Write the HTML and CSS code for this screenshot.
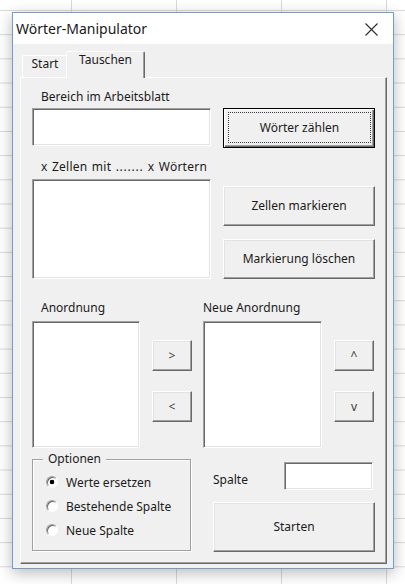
FILE: index.html
```html
<!DOCTYPE html>
<html lang="de">
<head>
<meta charset="utf-8">
<title>Wörter-Manipulator</title>
<link rel="stylesheet" href="styles.css">
</head>
<body>
<div class="window">
  <div class="titlebar">
    <span class="title">Wörter-Manipulator</span>
    <svg class="close" width="13" height="13" viewBox="0 0 13 13"><path d="M0.5 0.5 L12.5 12.5 M12.5 0.5 L0.5 12.5" stroke="#2b2b2b" stroke-width="1.1" fill="none"/></svg>
  </div>
  <div class="client">
    <div class="tabs">
      <div class="tab">Start</div>
      <div class="tab active">Tauschen</div>
    </div>
    <div class="panel">
      <div class="lbl lbl-1">Bereich im Arbeitsblatt</div>
      <div class="row-a">
        <div class="textbox tb-range"></div>
        <button class="btn btn-wide btn-default"><span class="focus">Wörter zählen</span></button>
      </div>
      <div class="lbl lbl-2">x Zellen mit <span class="dots">.......</span> x Wörtern</div>
      <div class="row-b">
        <div class="textbox lb-cells"></div>
        <div class="btn-col">
          <button class="btn btn-wide">Zellen markieren</button>
          <button class="btn btn-wide">Markierung löschen</button>
        </div>
      </div>
      <div class="order">
        <div class="lbl order-lbl-1">Anordnung</div>
        <div class="lbl order-lbl-2">Neue Anordnung</div>
        <div class="textbox lb-old"></div>
        <div class="arrows arrows-1">
          <button class="btn btn-arrow">&gt;</button>
          <button class="btn btn-arrow">&lt;</button>
        </div>
        <div class="textbox lb-new"></div>
        <div class="arrows arrows-2">
          <button class="btn btn-arrow">^</button>
          <button class="btn btn-arrow">v</button>
        </div>
      </div>
      <div class="row-d">
        <div class="frame">
          <span class="legend">Optionen</span>
          <div class="radio-row"><span class="radio on"></span><span>Werte ersetzen</span></div>
          <div class="radio-row"><span class="radio"></span><span>Bestehende Spalte</span></div>
          <div class="radio-row"><span class="radio"></span><span>Neue Spalte</span></div>
        </div>
        <div class="right">
          <div class="spalte-row">
            <span class="spalte-lbl">Spalte</span>
            <div class="textbox tb-col"></div>
          </div>
          <button class="btn btn-start">Starten</button>
        </div>
      </div>
    </div>
  </div>
</div>
</body>
</html>
```
FILE: styles.css
```css
* { box-sizing: border-box; }

html, body { height: 584px; }

body {
  margin: 0;
  overflow: hidden;
  font-family: "Noto Sans", "Open Sans", sans-serif;
  font-size: 12px;
  color: #1b1b1b;
  background-color: #ffffff;
  background-image:
    linear-gradient(to right, #d9d9d9 0, #d9d9d9 1px, transparent 1px),
    linear-gradient(to bottom, #d9d9d9 0, #d9d9d9 1px, transparent 1px);
  background-size: 105px 100%, 100% 24.2px;
  background-position: 71px 0, 0 10px;
}

.window {
  margin: 12px 0 0 12px;
  width: 382px;
  height: 557px;
  border: 1px solid #6f9fcf;
  background: #f0f0f0;
  box-shadow: 0 4px 14px rgba(0, 0, 0, 0.28);
  display: flex;
  flex-direction: column;
}

.titlebar {
  flex: none;
  height: 31px;
  background: #ffffff;
  display: flex;
  align-items: center;
  justify-content: space-between;
  padding: 1px 15px 0 3px;
}

.title {
  font-size: 14px;
  line-height: 20px;
  color: #1a1a1a;
}

.close { display: block; }

.client {
  flex: 1;
  display: flex;
  flex-direction: column;
  padding: 7px 6px 4px 7px;
}

.tabs {
  flex: none;
  height: 27px;
  display: flex;
  align-items: flex-end;
  padding-left: 2px;
  margin-bottom: -1px;
  position: relative;
  z-index: 1;
}

.tab {
  width: 46px;
  height: 22px;
  margin-bottom: 1px;
  background: #f0f0f0;
  border-top: 1px solid #ffffff;
  border-left: 1px solid #ffffff;
  border-right: 1px solid #8a8a8a;
  border-radius: 2px 2px 0 0;
  text-align: center;
  line-height: 16px;
}

.tab.active {
  width: 79px;
  height: 27px;
  margin-left: -2px;
  margin-bottom: 0;
  border-right: 1px solid #696969;
  box-shadow: inset -1px 0 #a0a0a0;
}

.panel {
  flex: 1;
  border-top: 1px solid #ffffff;
  border-left: 1px solid #ffffff;
  border-right: 1px solid #696969;
  border-bottom: 1px solid #696969;
  box-shadow: inset -1px -1px #a0a0a0;
  padding: 11px 0 0 11px;
}

.lbl {
  line-height: 16px;
  padding-left: 9px;
}

.textbox {
  background: #ffffff;
  border: 1px solid;
  border-color: #a0a0a0 #ffffff #ffffff #a0a0a0;
  box-shadow: inset 1px 1px #696969, inset -1px -1px #e3e3e3;
}

.btn {
  font: inherit;
  color: inherit;
  background: #f0f0f0;
  border: 1px solid;
  border-color: #ffffff #696969 #696969 #ffffff;
  box-shadow: inset -1px -1px #a0a0a0, inset 1px 1px #e3e3e3;
  padding: 0;
  display: flex;
  align-items: center;
  justify-content: center;
  line-height: 16px;
}

.btn-wide { width: 152px; height: 40px; }

.btn-default {
  border: 1px solid #000000;
  box-shadow: inset 1px 1px #ffffff, inset -1px -1px #696969, inset -2px -2px #a0a0a0;
  padding: 3px 3px 4px 4px;
}

.focus {
  flex: 1;
  align-self: stretch;
  border: 1px dotted #3a3a3a;
  display: flex;
  align-items: center;
  justify-content: center;
}

/* Top block */
.row-a {
  display: flex;
  align-items: flex-start;
  gap: 12px;
  margin-top: 3px;
}

.tb-range { width: 179px; height: 38px; }

.lbl-2 { margin-top: 11px; letter-spacing: 0.25px; word-spacing: 1px; }
.dots { letter-spacing: 0.75px; }

.row-b {
  display: flex;
  align-items: flex-start;
  gap: 12px;
  margin-top: 4px;
}

.lb-cells { width: 179px; height: 100px; }

.btn-col {
  display: flex;
  flex-direction: column;
  gap: 13px;
  padding-top: 7px;
}

/* Order lists */
.order {
  display: grid;
  grid-template-columns: 108px 12px 40px 11px 119px 12px 40px;
  grid-template-rows: 16px 127px;
  row-gap: 5px;
  margin-top: 21px;
}

.order-lbl-1 { grid-column: 1 / 4; grid-row: 1; }
.order-lbl-2 { grid-column: 5 / 8; grid-row: 1; padding-left: 0; }
.lb-old { grid-column: 1; grid-row: 2; }
.arrows-1 { grid-column: 3; grid-row: 2; }
.lb-new { grid-column: 5; grid-row: 2; }
.arrows-2 { grid-column: 7; grid-row: 2; }

.arrows {
  display: flex;
  flex-direction: column;
  gap: 20px;
  padding-top: 19px;
}

.btn-arrow {
  width: 40px;
  height: 31px;
  color: #3c3c3c;
}

/* Options */
.row-d {
  display: flex;
  align-items: flex-start;
  gap: 22px;
  margin-top: 11px;
}

.frame {
  position: relative;
  width: 159px;
  height: 92px;
  border: 1px solid #a0a0a0;
  box-shadow: inset 1px 1px #ffffff, 1px 1px #ffffff;
  padding: 10px 0 0 13px;
}

.legend {
  position: absolute;
  top: -9px;
  left: 10px;
  padding: 0 5px;
  background: #f0f0f0;
  line-height: 16px;
}

.radio-row {
  display: flex;
  align-items: center;
  gap: 8px;
  height: 24px;
}

.radio {
  flex: none;
  width: 12px;
  height: 12px;
  border-radius: 50%;
  border: 1px solid;
  border-color: #a0a0a0 #ffffff #ffffff #a0a0a0;
  background: #ffffff;
  box-shadow: inset 1px 1px #696969;
}

.radio.on {
  background: radial-gradient(circle at 50% 50%, #000000 0, #000000 2px, #ffffff 2.6px);
}

.right {
  display: flex;
  flex-direction: column;
}

.spalte-row {
  display: flex;
  align-items: flex-start;
}

.spalte-lbl {
  width: 71px;
  margin-top: 13px;
  line-height: 16px;
}

.tb-col { width: 89px; height: 28px; margin-top: 3px; }

.btn-start {
  width: 162px;
  height: 50px;
  margin-top: 12px;
}
```
